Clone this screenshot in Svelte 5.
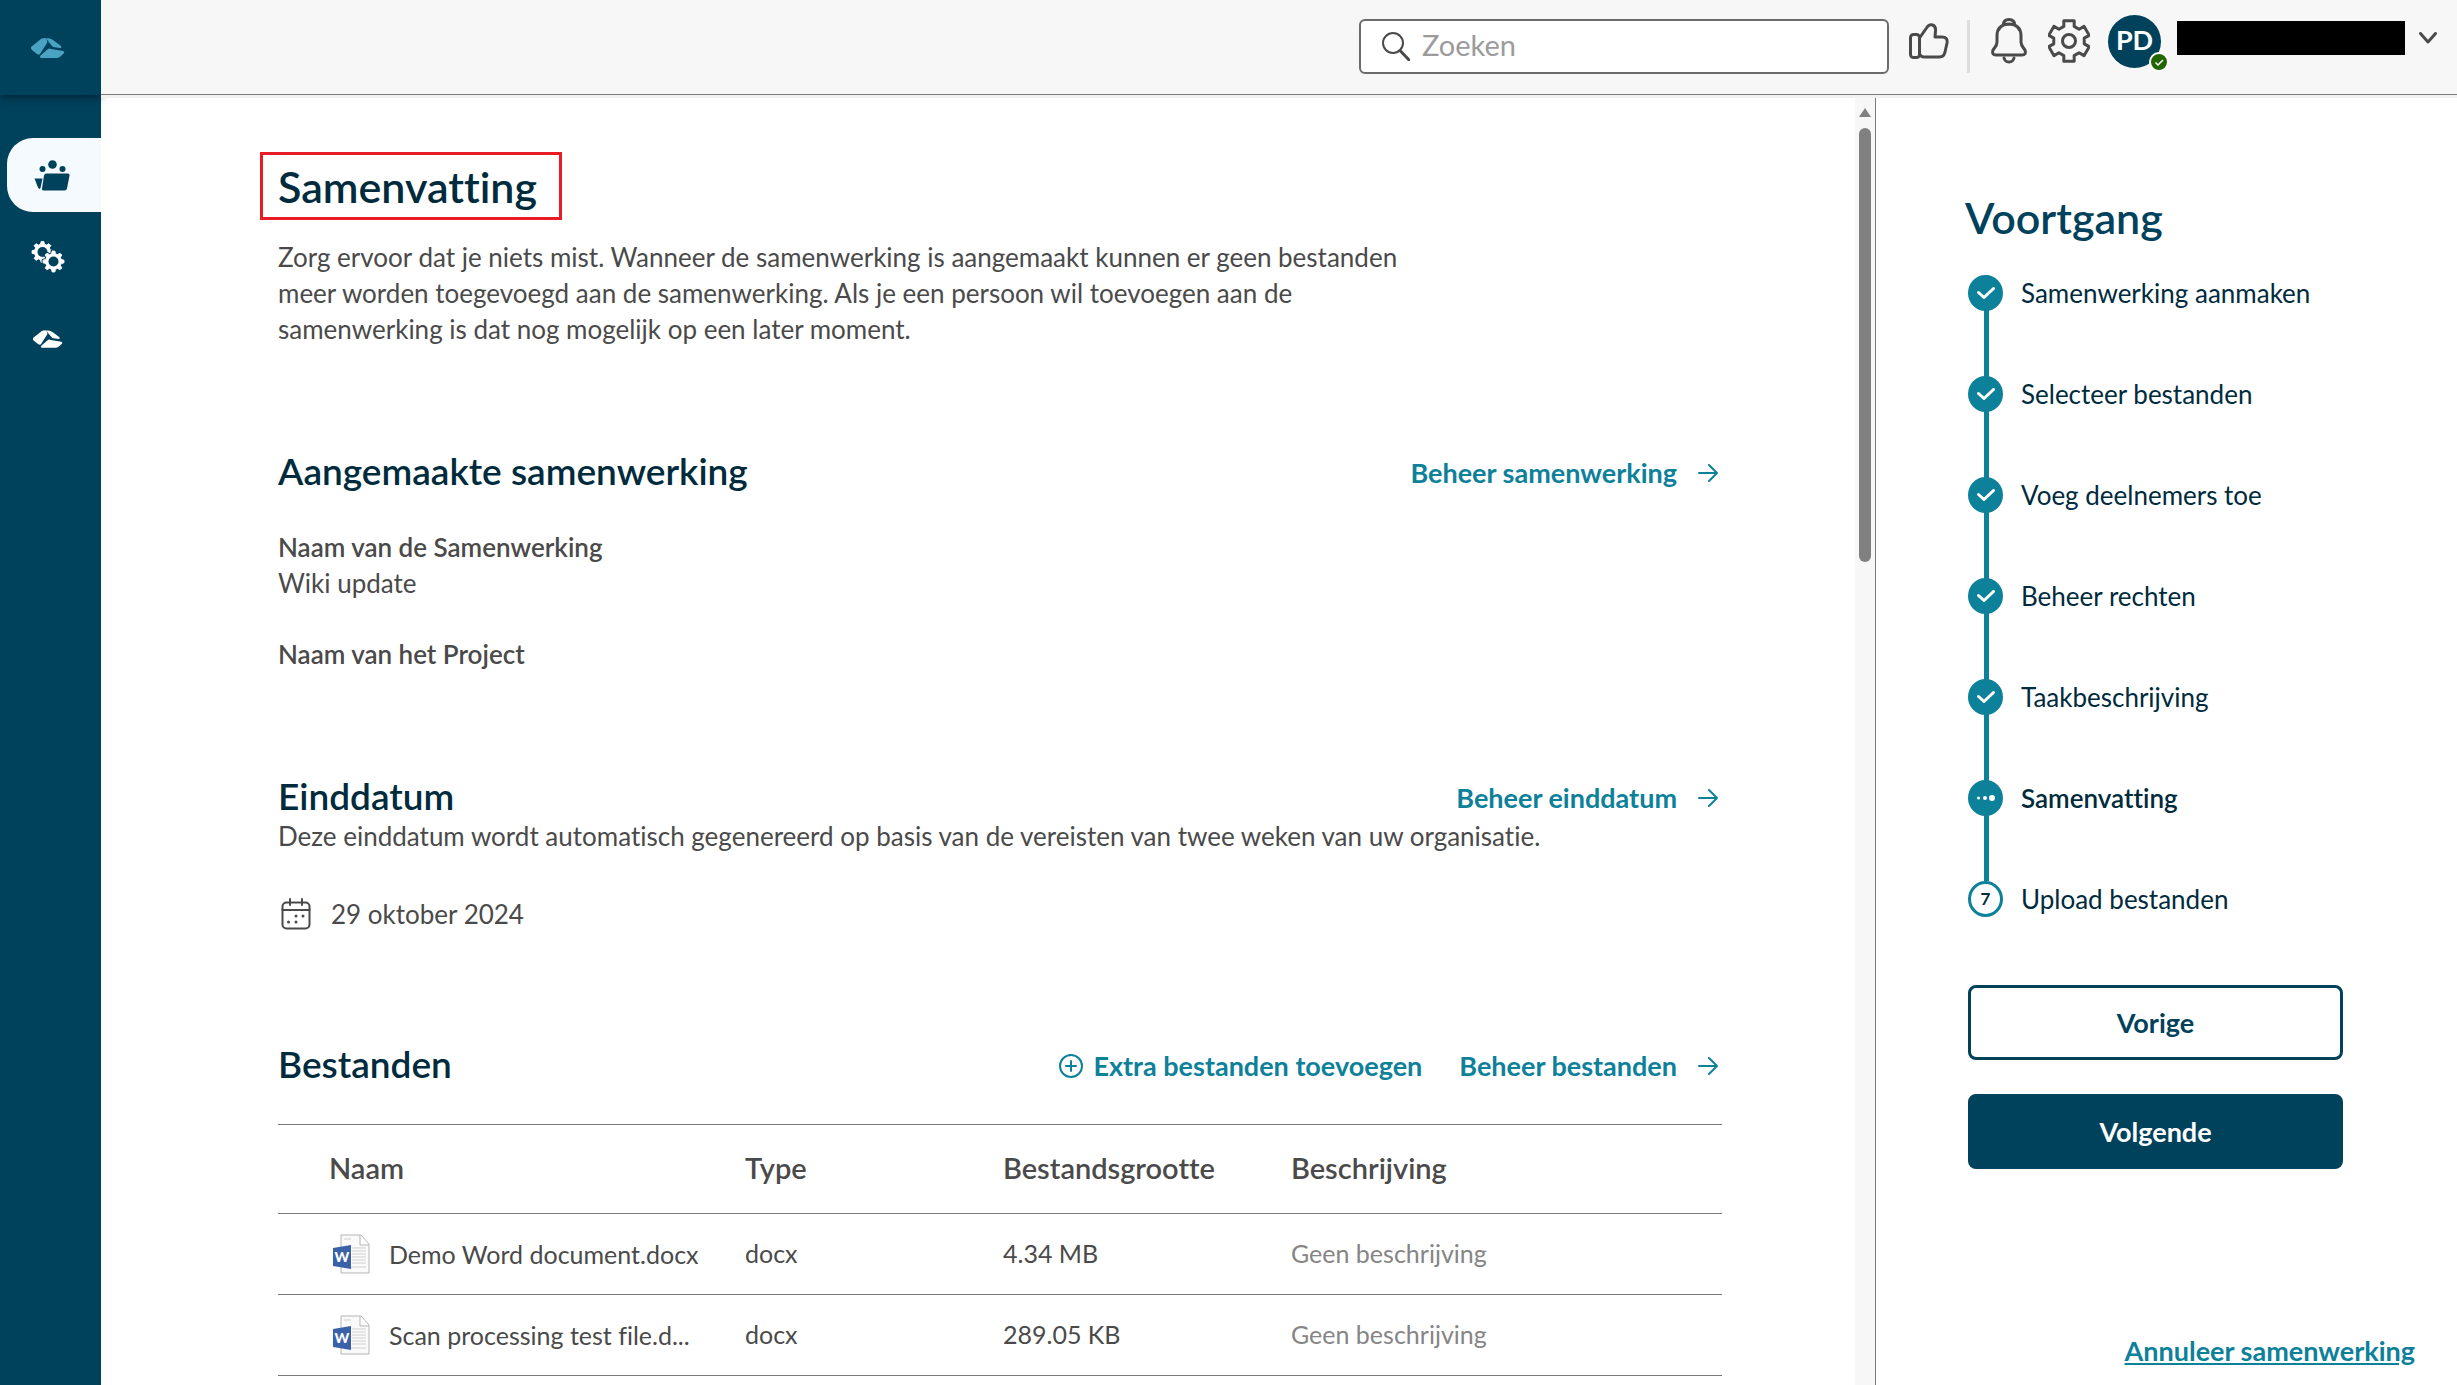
<script>
  const steps = [
    { label: 'Samenwerking aanmaken', state: 'done' },
    { label: 'Selecteer bestanden', state: 'done' },
    { label: 'Voeg deelnemers toe', state: 'done' },
    { label: 'Beheer rechten', state: 'done' },
    { label: 'Taakbeschrijving', state: 'done' },
    { label: 'Samenvatting', state: 'current' },
    { label: 'Upload bestanden', state: 'todo' }
  ];

  const files = [
    { name: 'Demo Word document.docx', type: 'docx', size: '4.34 MB' },
    { name: 'Scan processing test file.d...', type: 'docx', size: '289.05 KB' }
  ];

  let search = $state('');

  // outline of a cog wheel, first tooth pointing up
  function cog(cx, cy, teeth, outer, inner, tip, root) {
    const points = [];
    for (let i = 0; i < teeth; i++) {
      const a = (i * 2 * Math.PI) / teeth - Math.PI / 2;
      for (const [r, d] of [[inner, -root], [outer, -tip], [outer, tip], [inner, root]]) {
        points.push(`${(cx + r * Math.cos(a + d)).toFixed(2)} ${(cy + r * Math.sin(a + d)).toFixed(2)}`);
      }
    }
    return `M${points.join('L')}Z`;
  }
</script>

{#snippet rocks()}
  <path d="M0 9L10 1Q12 0 14 0Q17 1 16 5L9 16Q8 17 6 16L1 12Q-1 10 0 9Z" />
  <path d="M15 0Q19 0 22 2L30 8Q31 10 29 10L22 9Q18 5 15 0Z" />
  <path d="M10 17L17 11Q18 10 20 11L32 13Q34 14 33 15L30 18Q28 20 26 20H10Q8 19 10 17Z" />
{/snippet}

{#snippet arrow()}
  <svg width="20" height="18" viewBox="0 0 20 18" class="line" aria-hidden="true">
    <path d="M1 9H19M11 1L19 9L11 17" stroke-width="2" />
  </svg>
{/snippet}

<div class="app">
  <nav class="sidebar">
    <a class="brand" href="#home" aria-label="Home">
      <svg width="34" height="20" viewBox="0 0 34 20" class="brand-logo">{@render rocks()}</svg>
    </a>
    <a class="item active" href="#samenwerkingen" aria-label="Samenwerkingen">
      <svg width="36" height="31" viewBox="0 0 36 31" fill="currentColor">
        <circle cx="18.500" cy="4.500" r="4.300" />
        <circle cx="8.500" cy="9" r="3" />
        <circle cx="28.500" cy="9" r="3" />
        <path d="M12.500 13.500H34Q36 13.500 35.500 15.500L33 28.500Q32.500 30.500 30.500 30.500H9.500Q7.500 30.500 8 28.500L10 15.500Q10.500 13.500 12.500 13.500Z" />
        <path d="M0.500 18.500H8.500L6.500 28Q5.500 30 4 27.500Z" />
      </svg>
    </a>
    <a class="item" href="#beheer" aria-label="Beheer">
      <svg width="34" height="34" viewBox="0 0 34 34">
        <path class="cog" d={cog(11.5, 12, 8, 10.5, 8, 0.13, 0.24)} />
        <circle cx="11.500" cy="12" r="5" fill="#00425c" />
        <path class="cog cut" d={cog(22.5, 21.5, 8, 10.5, 8, 0.13, 0.24)} />
        <path class="cog" d={cog(22.5, 21.5, 8, 10.5, 8, 0.13, 0.24)} />
        <circle cx="22.500" cy="21.500" r="5" fill="#00425c" />
      </svg>
    </a>
    <a class="item" href="#organisatie" aria-label="Organisatie">
      <svg width="30" height="18" viewBox="0 0 34 20" fill="currentColor">{@render rocks()}</svg>
    </a>
  </nav>

  <div class="page">
    <header>
      <label class="search">
        <svg width="28" height="29" viewBox="0 0 28 29" class="line" aria-hidden="true">
          <circle cx="11" cy="11" r="10" stroke-width="2" />
          <path d="M18 18.500L27 28" stroke-width="3" />
        </svg>
        <input type="text" placeholder="Zoeken" aria-label="Zoeken" bind:value={search} />
      </label>
      <div class="icons">
        <button aria-label="Feedback">
          <svg width="40" height="36" viewBox="0 0 40 36" class="line">
            <rect x="1.500" y="11.500" width="9" height="23" rx="3" stroke-width="3" />
            <path d="M10.500 15L17.500 5Q20 1 23.500 2Q27 3 26.500 8L26 14H33Q39 14 38 20L36 29Q35 34 30.500 34H15Q12 34 10.500 31" stroke-width="3" />
          </svg>
        </button>
      </div>
      <span class="divider"></span>
      <div class="icons">
        <button aria-label="Meldingen">
          <svg width="36" height="46" viewBox="0 0 36 46" class="line">
            <path d="M12.500 6.500Q12.500 1.500 18 1.500Q23.500 1.500 23.500 6.500" stroke-width="3" />
            <path d="M18 6Q6 6.500 6 18V24Q6 27 3.500 30L2 32Q0.500 37 5 37H31Q35.500 37 34 32L32.500 30Q30 27 30 24V18Q30 6.500 18 6Z" stroke-width="3" />
            <path d="M13 40Q14 44 18 44Q22 44 23 40" stroke-width="3" />
          </svg>
        </button>
        <button aria-label="Instellingen">
          <svg width="42" height="46" viewBox="0 0 42 46" class="line">
            <path d={cog(21, 23, 6, 21, 15.5, 0.25, 0.34)} stroke-width="3" />
            <circle cx="21" cy="23" r="6.500" stroke-width="3" />
          </svg>
        </button>
        <div class="avatar">
          PD
          <svg class="badge" width="20" height="20" viewBox="0 0 20 20">
            <circle cx="10" cy="10" r="9" />
            <path d="M6.500 10.500L9 13L14 8" />
          </svg>
        </div>
      </div>
      <button class="account" aria-label="Account">
        <span class="username"></span>
        <svg width="18" height="12" viewBox="0 0 18 12" class="line">
          <path d="M1.500 1.500L9 10L16.500 1.500" stroke-width="3" />
        </svg>
      </button>
    </header>

    <div class="body">
      <main>
        <h1>Samenvatting</h1>
        <p class="intro">
          Zorg ervoor dat je niets mist. Wanneer de samenwerking is aangemaakt kunnen er geen bestanden
          meer worden toegevoegd aan de samenwerking. Als je een persoon wil toevoegen aan de
          samenwerking is dat nog mogelijk op een later moment.
        </p>

        <section>
          <div class="title">
            <h2>Aangemaakte samenwerking</h2>
            <a class="manage" href="#samenwerking">Beheer samenwerking {@render arrow()}</a>
          </div>
          <dl>
            <dt>Naam van de Samenwerking</dt>
            <dd>Wiki update</dd>
            <dt>Naam van het Project</dt>
          </dl>
        </section>

        <section>
          <div class="title">
            <h2>Einddatum</h2>
            <a class="manage" href="#einddatum">Beheer einddatum {@render arrow()}</a>
          </div>
          <p class="note">Deze einddatum wordt automatisch gegenereerd op basis van de vereisten van twee weken van uw organisatie.</p>
          <div class="date">
            <svg width="30" height="32" viewBox="0 0 30 32" class="line" aria-hidden="true">
              <rect x="1.500" y="4.500" width="27" height="26" rx="4" stroke-width="2" />
              <path d="M1.500 12H28.500M9 1V7M21 1V7" stroke-width="2" />
              <path d="M15 18V18M22 18V18M7.500 24V24M15 24V24" stroke-width="3" />
            </svg>
            29 oktober 2024
          </div>
        </section>

        <section>
          <div class="title">
            <h2>Bestanden</h2>
            <div class="actions">
              <a class="manage add" href="#toevoegen">
                <svg width="24" height="24" viewBox="0 0 24 24" class="line" aria-hidden="true">
                  <circle cx="12" cy="12" r="11" stroke-width="2" />
                  <path d="M12 7V17M7 12H17" stroke-width="2" />
                </svg>
                Extra bestanden toevoegen
              </a>
              <a class="manage" href="#bestanden">Beheer bestanden {@render arrow()}</a>
            </div>
          </div>
          <table>
            <thead>
              <tr>
                <th class="name">Naam</th>
                <th class="type">Type</th>
                <th class="size">Bestandsgrootte</th>
                <th>Beschrijving</th>
              </tr>
            </thead>
            <tbody>
              {#each files as file}
                <tr>
                  <td class="name">
                    <div class="file">
                      <svg width="38" height="40" viewBox="0 0 38 40" aria-hidden="true">
                        <path d="M9 1H29L37 10V39H9Z" fill="#fafafa" stroke="#b5b5b5" />
                        <path d="M28 1V11H37" fill="#fff" stroke="#b5b5b5" />
                        <path d="M12 5H19M20 14H34M20 17H34M20 20H34M20 23H34M20 26H34M20 29H34M12 33H34" stroke="#cfcfcf" />
                        <path d="M1 14L19 11V35L1 32Z" fill="#3a62a8" />
                        <text x="10" y="28" text-anchor="middle">W</text>
                      </svg>
                      {file.name}
                    </div>
                  </td>
                  <td>{file.type}</td>
                  <td>{file.size}</td>
                  <td class="empty">Geen beschrijving</td>
                </tr>
              {/each}
            </tbody>
          </table>
        </section>
      </main>

      <div class="scrollbar" aria-hidden="true">
        <span class="up"></span>
        <span class="thumb"></span>
      </div>

      <aside>
        <h2>Voortgang</h2>
        <ol>
          {#each steps as step, i}
            <li class={step.state}>
              <span class="marker">
                {#if step.state === 'done'}
                  <svg width="18" height="12" viewBox="0 0 18 12"><path d="M1.500 5.500L7 10.500L16.500 1.500" /></svg>
                {:else if step.state === 'current'}
                  <svg width="18" height="6" viewBox="0 0 18 6" fill="#fff">
                    <circle cx="1.500" cy="3" r="1.500" />
                    <circle cx="8" cy="3" r="2" />
                    <circle cx="15" cy="3" r="3" />
                  </svg>
                {:else}
                  {i + 1}
                {/if}
              </span>
              {step.label}
            </li>
          {/each}
        </ol>
        <button class="step-button">Vorige</button>
        <button class="step-button primary">Volgende</button>
        <a class="cancel" href="#annuleer">Annuleer samenwerking</a>
      </aside>
    </div>
  </div>
</div>

<style>
  .app {
    display: flex;
    height: 100vh;
    overflow: hidden;
    background: #fff;
    color: #4a4a4a;
    font-family: Lato, "Liberation Sans", sans-serif;
    font-size: 26px;
    font-variant-ligatures: none;
    line-height: 36px;
  }

  h1, h2, p, dl, dd, ol {
    margin: 0;
    padding: 0;
  }

  a {
    color: #0e819a;
    text-decoration: none;
  }

  button {
    padding: 0;
    border: 0;
    background: none;
    color: inherit;
    font: inherit;
    cursor: pointer;
  }

  svg {
    display: block;
    flex: none;
  }

  .line {
    fill: none;
    stroke: currentColor;
    stroke-linecap: round;
    stroke-linejoin: round;
  }

  /* sidebar */
  .sidebar {
    display: flex;
    flex: none;
    flex-direction: column;
    width: 101px;
    background: #00425c;
  }

  .brand {
    display: flex;
    align-items: center;
    justify-content: center;
    height: 95px;
    margin-bottom: 43px;
    padding-right: 5px;
    box-shadow: 0 3px 8px rgba(0, 20, 30, 0.6);
  }

  .brand-logo {
    fill: #4ba3c3;
  }

  .item {
    display: flex;
    align-items: center;
    justify-content: center;
    height: 74px;
    margin-bottom: 8px;
    padding-right: 5px;
    color: #fff;
  }

  .item.active {
    margin-left: 7px;
    border-radius: 26px 0 0 26px;
    background: #f5faff;
    color: #00425c;
  }

  .cog {
    fill: #fff;
    stroke: #fff;
    stroke-linejoin: round;
  }

  .cog.cut {
    stroke: #00425c;
    stroke-width: 3;
  }

  /* header */
  .page {
    display: flex;
    flex: 1;
    flex-direction: column;
    min-width: 0;
  }

  header {
    display: flex;
    flex: none;
    justify-content: flex-end;
    height: 94px;
    padding-right: 20px;
    border-bottom: 1px solid #7a7a7a;
    background: #f7f7f7;
    box-shadow: 0 3px 0 #f2f2f2;
  }

  .search {
    display: flex;
    align-items: center;
    gap: 12px;
    box-sizing: border-box;
    width: 530px;
    height: 55px;
    margin: 19px 20px 0 0;
    padding: 0 21px;
    border: 2px solid #6b6b6b;
    border-radius: 6px;
    background: #fff;
  }

  .search input {
    flex: 1;
    min-width: 0;
    height: 36px;
    margin-bottom: 3px;
    padding: 0;
    border: 0;
    outline: 0;
    color: inherit;
    font: inherit;
    font-size: 29px;
  }

  .search input::placeholder {
    color: #9b9b9b;
    opacity: 1;
  }

  .icons {
    display: flex;
    align-items: center;
    gap: 21px;
    height: 82px;
  }

  .divider {
    width: 3px;
    height: 53px;
    margin: 20px 21px 0 18px;
    background: #dedede;
  }

  .avatar {
    position: relative;
    width: 53px;
    height: 53px;
    margin-left: -3px;
    border-radius: 50%;
    background: #00425c;
    color: #fff;
    font-size: 27px;
    font-weight: 700;
    line-height: 50px;
    text-align: center;
  }

  .badge {
    position: absolute;
    right: -8px;
    bottom: -4px;
  }

  .badge circle {
    fill: #226600;
    stroke: #fff;
    stroke-width: 2;
  }

  .badge path {
    fill: none;
    stroke: #fff;
    stroke-width: 1.500;
  }

  .account {
    display: flex;
    align-items: center;
    gap: 14px;
    height: 75px;
    margin-left: 16px;
  }

  .username {
    width: 228px;
    height: 34px;
    background: #000;
  }

  /* summary */
  .body {
    display: flex;
    flex: 1;
    min-height: 0;
    padding-top: 3px;
  }

  main {
    flex: 1;
    padding: 54px 133px 0 177px;
    overflow: hidden;
  }

  h1 {
    width: fit-content;
    margin-left: -18px;
    padding: 2px 22px 0 15px;
    border: 3px solid #e81c24;
    color: #002b3d;
    font-size: 43px;
    font-weight: 600;
    line-height: 60px;
  }

  .intro {
    max-width: 1130px;
    margin-top: 19px;
  }

  section {
    margin-top: 104px;
  }

  .title {
    display: flex;
    align-items: flex-end;
    justify-content: space-between;
    height: 40px;
  }

  h2 {
    color: #002b3d;
    font-size: 37px;
    font-weight: 600;
    line-height: 40px;
  }

  .manage {
    display: flex;
    align-items: center;
    gap: 21px;
    padding-right: 4px;
    font-size: 27px;
    font-weight: 700;
  }

  .manage.add {
    gap: 10px;
    padding: 0;
  }

  .actions {
    display: flex;
    gap: 37px;
  }

  dl {
    margin-top: 38px;
  }

  dt {
    font-weight: 600;
  }

  dd {
    margin-bottom: 35px;
  }

  .note {
    margin-top: 2px;
  }

  .date {
    display: flex;
    align-items: center;
    gap: 20px;
    margin-top: 42px;
    padding: 0 0 8px 3px;
  }

  table {
    width: 100%;
    margin-top: 40px;
    border-collapse: collapse;
    table-layout: fixed;
  }

  tr {
    height: 81px;
    border-top: 1px solid #7a7a7a;
    border-bottom: 1px solid #7a7a7a;
  }

  thead tr {
    height: 89px;
  }

  th, td {
    padding: 0 0 2px;
    text-align: left;
  }

  th {
    font-size: 29px;
    font-weight: 600;
  }

  .name {
    width: 416px;
    padding-left: 51px;
  }

  .type {
    width: 258px;
  }

  .size {
    width: 288px;
  }

  td {
    font-size: 25px;
  }

  td.name {
    padding-bottom: 0;
  }

  .file {
    display: flex;
    align-items: center;
    gap: 19px;
    padding-left: 3px;
    white-space: nowrap;
  }

  .file text {
    fill: #fff;
    font-size: 14px;
    font-weight: 900;
  }

  .empty {
    color: #858585;
  }

  .scrollbar {
    display: flex;
    flex: none;
    flex-direction: column;
    align-items: center;
    gap: 11px;
    width: 20px;
    padding-top: 10px;
    border-right: 1px solid #7a7a7a;
    background: #f7f7f7;
  }

  .up {
    width: 12px;
    height: 9px;
    background: #808080;
    clip-path: polygon(50% 0, 100% 100%, 0 100%);
  }

  .thumb {
    width: 12px;
    height: 34%;
    border-radius: 6px;
    background: #808080;
  }

  /* progress */
  aside {
    display: flex;
    flex: none;
    flex-direction: column;
    box-sizing: border-box;
    width: 581px;
    padding: 94px 42px 16px 92px;
  }

  aside h2 {
    margin-left: -3px;
    color: #00425c;
    font-size: 43px;
    line-height: 52px;
  }

  ol {
    list-style: none;
    margin-top: 31px;
  }

  li {
    display: flex;
    gap: 18px;
    height: 101px;
    color: #002b3d;
    background: linear-gradient(#0e819a, #0e819a) 16px 0 / 5px 100% no-repeat;
  }

  li:last-child {
    height: 36px;
    background: none;
  }

  .current {
    font-weight: 600;
  }

  .marker {
    display: flex;
    align-items: center;
    justify-content: center;
    box-sizing: border-box;
    width: 35px;
    height: 36px;
    border-radius: 50%;
    background: #0e819a;
  }

  .marker path {
    fill: none;
    stroke: #fff;
    stroke-width: 3;
    stroke-linecap: round;
    stroke-linejoin: round;
  }

  .todo .marker {
    border: 3px solid #0e819a;
    background: #fff;
    font-size: 17px;
    font-weight: 700;
  }

  .step-button {
    box-sizing: border-box;
    height: 75px;
    margin: 68px 72px 0 0;
    border: 3px solid #00425c;
    border-radius: 8px;
    color: #00425c;
    font-size: 27px;
    font-weight: 700;
  }

  .step-button.primary {
    margin-top: 34px;
    background: #00425c;
    color: #fff;
  }

  .cancel {
    align-self: flex-end;
    margin-top: auto;
    font-size: 27px;
    font-weight: 700;
    text-decoration: underline;
  }
</style>
